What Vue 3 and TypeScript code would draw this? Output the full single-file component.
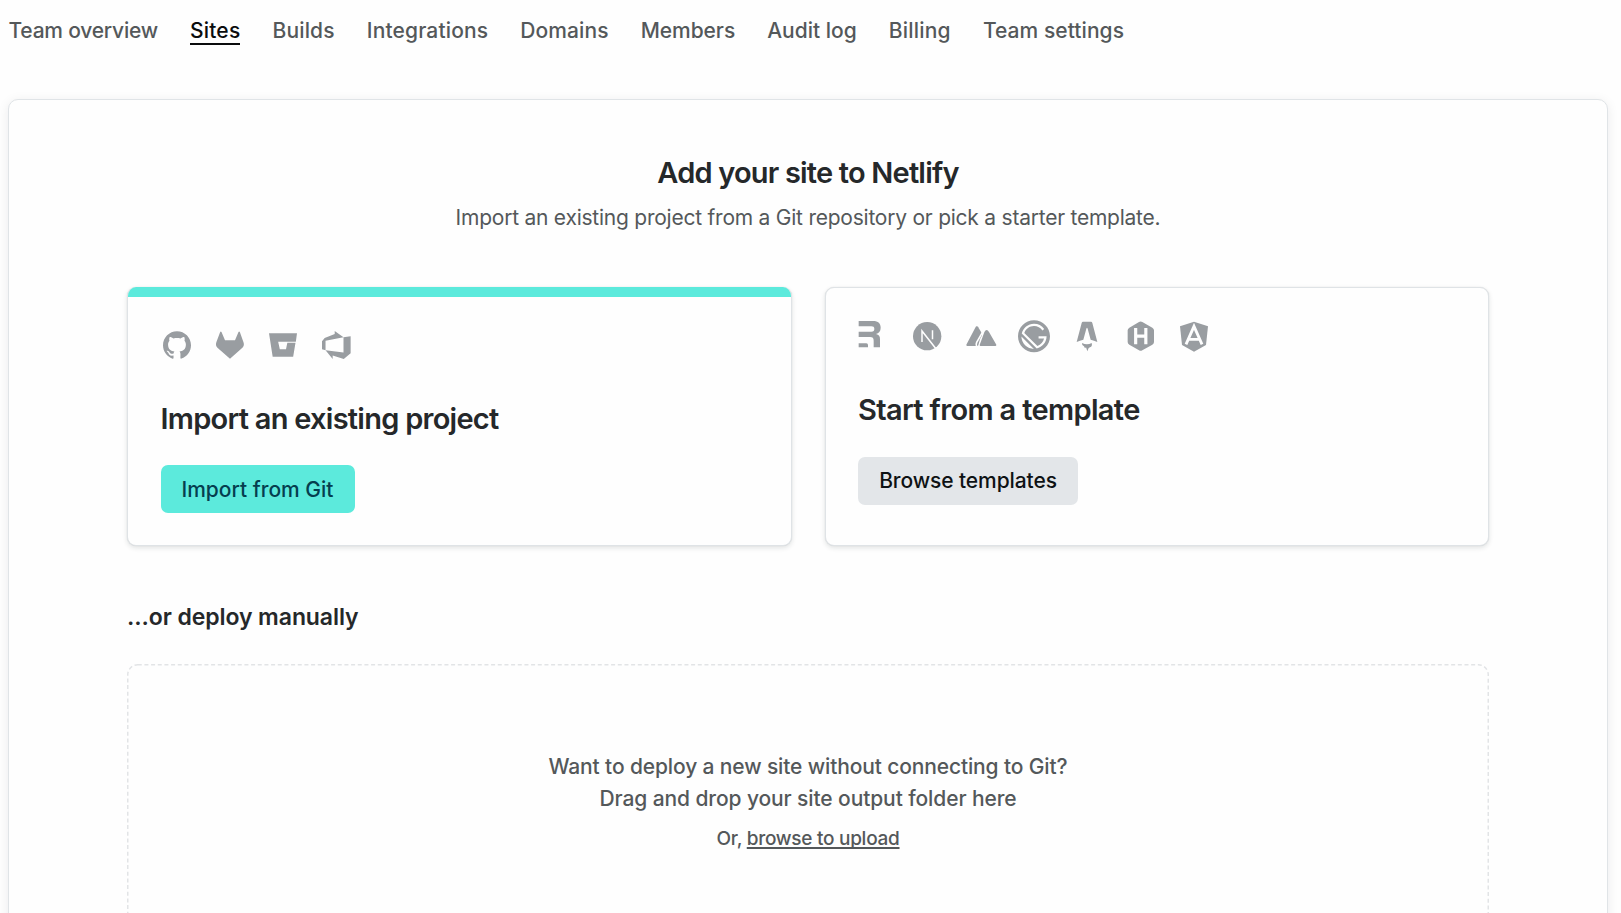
<script setup lang="ts">
interface NavItem {
  label: string
  tracking: number
  active?: boolean
}

const navItems: NavItem[] = [
  { label: 'Team overview', tracking: -0.22 },
  { label: 'Sites', tracking: 0.2, active: true },
  { label: 'Builds', tracking: 0.16 },
  { label: 'Integrations', tracking: 0.15 },
  { label: 'Domains', tracking: 0.1 },
  { label: 'Members', tracking: -0.06 },
  { label: 'Audit log', tracking: 0 },
  { label: 'Billing', tracking: 0.2 },
  { label: 'Team settings', tracking: 0.06 },
]
</script>

<template>
  <div class="page">
    <nav class="nav">
      <a
        v-for="item in navItems"
        :key="item.label"
        class="nav-link"
        :class="{ active: item.active }"
        :style="{ letterSpacing: item.tracking + 'px' }"
      >{{ item.label }}</a>
    </nav>

    <main class="panel">
      <h1 class="title">Add your site to Netlify</h1>
      <p class="subtitle">Import an existing project from a Git repository or pick a starter template.</p>

      <div class="cards">
        <section class="card card-import">
          <div class="icons">
            <!-- GitHub -->
            <svg viewBox="0 0 96 96"><path transform="translate(6 6) scale(3.5)" d="M12 .297c-6.63 0-12 5.373-12 12 0 5.303 3.438 9.8 8.205 11.385.6.113.82-.258.82-.577 0-.285-.01-1.04-.015-2.04-3.338.724-4.042-1.61-4.042-1.61C4.422 18.07 3.633 17.7 3.633 17.7c-1.087-.744.084-.729.084-.729 1.205.084 1.838 1.236 1.838 1.236 1.07 1.835 2.809 1.305 3.495.998.108-.776.417-1.305.76-1.605-2.665-.3-5.466-1.332-5.466-5.93 0-1.31.465-2.38 1.235-3.22-.135-.303-.54-1.523.105-3.176 0 0 1.005-.322 3.3 1.23.96-.267 1.98-.399 3-.405 1.02.006 2.04.138 3 .405 2.28-1.552 3.285-1.23 3.285-1.23.645 1.653.24 2.873.12 3.176.765.84 1.23 1.91 1.23 3.22 0 4.61-2.805 5.625-5.475 5.92.42.36.81 1.096.81 2.22 0 1.606-.015 2.896-.015 3.286 0 .315.21.69.825.57C20.565 22.092 24 17.592 24 12.297c0-6.627-5.373-12-12-12" /></svg>
            <!-- GitLab -->
            <svg viewBox="0 0 96 96"><path d="M18.5 9q2-3 4 0L33 34h30L73.500 9q2-3 4 0l11 31q4 11-5 18L48 89 12 58q-9-7-5-18z" /></svg>
            <!-- Bitbucket -->
            <svg viewBox="0 0 96 96"><path d="M6 13H90L86.500 38H33.500L38.500 61H57L61 41.500H85.500L78.500 83H17z" /></svg>
            <!-- Azure DevOps -->
            <svg viewBox="0 0 96 96"><path transform="translate(6 6) scale(3.58 3.5)" d="M0 8.877L2.247 5.91l8.405-3.416V.022l7.37 5.393L2.966 8.338v8.225L0 15.707zm24-4.45v14.651l-5.753 4.9-9.303-3.057v3.056l-5.978-7.416 15.057 1.798V5.415z" /></svg>
          </div>
          <h2 class="card-title import-title">Import an existing project</h2>
          <button class="btn btn-primary">Import from Git</button>
        </section>

        <section class="card card-template">
          <div class="icons">
            <!-- Remix -->
            <svg viewBox="0 0 96 96"><path d="M2 3H45C61 3 68 11 68 23C68 34 62 39 54 42C63 44 66 49 66 58V82H47V62C47 54 44 51 36 51H2V35H40C47 35 49 32 49 27C49 21 46 19 40 19H2zM2 70H25Q30 70 30 75V82H2z" /></svg>
            <!-- Next.js -->
            <svg viewBox="0 0 96 96">
              <circle cx="48.5" cy="48.5" r="42.500" />
              <path class="cut" stroke-width="4.500" d="M33 66V33L76 88M64.500 31V58" />
            </svg>
            <!-- Nuxt -->
            <svg viewBox="0 0 96 96"><path class="round" d="M37 75H7L33 26Q36 18 39 26L47 40zM47 75H91L69 37Q65 29 61 37zM7 75L35 22L48 45L32 75z" /><path class="cut" stroke-width="5" d="M54 34L35 67Q32 73 35 80" /></svg>
            <!-- Gatsby -->
            <svg viewBox="0 0 96 96"><path transform="translate(0 1) scale(4)" d="M12 0C5.400 0 0 5.400 0 12s5.400 12 12 12 12-5.400 12-12S18.600 0 12 0zm0 2.571c3.171 0 5.915 1.460 7.629 3.858l-1.286 1.115C16.886 5.572 14.571 4.286 12 4.286c-3.343 0-6.171 2.143-7.286 5.143l9.857 9.857c2.486-.857 4.373-3 4.973-5.572h-4.115V12h6c0 4.457-3.172 8.228-7.372 9.170L2.830 9.944C3.772 5.743 7.543 2.570 12 2.570zm-9.429 9.600l9.344 9.258c-2.400-.086-4.801-.943-6.601-2.743-1.800-1.800-2.743-4.201-2.743-6.515z" /></svg>
            <!-- Astro -->
            <svg viewBox="0 0 96 96"><path d="M36 5H60Q63 5 64 9L79 66Q69 61 59 59L50 26Q48 21 46 26L37 59Q27 61 17 66L32 9Q33 5 36 5zM33 69Q48 77 62 69Q65 79 57 82L53 84L49 94L45 82L42 85L39 79Q32 76 33 69z" /></svg>
            <!-- Hugo -->
            <svg viewBox="0 0 96 96"><path d="M42 6Q47 3 52 6L82 23Q87 26 87 31V66Q87 71 82 74L52 91Q47 94 42 91L13 74Q8 71 8 66V31Q8 26 13 23z" /><path class="cut" stroke-width="9.500" d="M32 24V73M62.500 24V73M32 48.500H62" /></svg>
            <!-- Angular -->
            <svg viewBox="0 0 96 96"><path d="M48 5L90 19L84 75L48 95L12 75L6 19z" /><path class="cut" stroke-width="8.500" d="M24 73L48 19L72 73M33 58H63" /></svg>
          </div>
          <h2 class="card-title template-title">Start from a template</h2>
          <button class="btn btn-secondary">Browse templates</button>
        </section>
      </div>

      <h3 class="manual-title">...or deploy manually</h3>

      <div class="dropzone">
        <svg class="dropzone-outline"><rect x="0.750" y="0.750" width="1360.500" height="400" rx="10" /></svg>
        <p class="drop-line question">Want to deploy a new site without connecting to Git?</p>
        <p class="drop-line">Drag and drop your site output folder here</p>
        <p class="upload">Or, <a class="upload-link">browse to upload</a></p>
      </div>
    </main>
  </div>
</template>

<style>
body {
  margin: 0;
  background: #fefefe;
  overflow: hidden;
}
</style>

<style scoped>
.page {
  box-sizing: border-box;
  width: 1621px;
  height: 913px;
  overflow: hidden;
  background: #fefefe;
  color: #54585a;
  font-family: Inter, "Liberation Sans", sans-serif;
}

h1, h2, h3, p {
  margin: 0;
}

.nav {
  display: flex;
  gap: 32.050px;
  padding: 15px 0 0 8.500px;
  height: 84px;
}

.nav-link {
  height: 27.500px;
  font-size: 21px;
  line-height: 31px;
  font-weight: 500;
  white-space: nowrap;
}

.nav-link.active {
  color: #0a0c0d;
  border-bottom: 2px solid #0a0c0d;
}

.panel {
  box-sizing: border-box;
  width: 1600px;
  height: 900px;
  margin-left: 8px;
  padding: 53px 118px 0;
  border: 1px solid #e0e4e7;
  border-radius: 10px;
  background: #fefefe;
  box-shadow: 0 2px 12px rgba(14, 30, 37, 0.08);
}

.title {
  font-size: 29px;
  line-height: 40px;
  font-weight: 600;
  letter-spacing: -0.810px;
  color: #25282a;
  text-align: center;
}

.subtitle {
  margin-top: 9px;
  font-size: 21px;
  line-height: 32px;
  letter-spacing: -0.235px;
  text-align: center;
}

.cards {
  display: grid;
  grid-template-columns: 1fr 1fr;
  gap: 33px;
  margin-top: 53px;
}

.card {
  box-sizing: border-box;
  height: 259px;
  padding: 32px 32.500px 0;
  border: 1px solid #dfe3e6;
  border-radius: 9px;
  background: #fefefe;
  box-shadow: 0 2px 5px rgba(14, 30, 37, 0.12), 0 0 1px rgba(14, 30, 37, 0.15);
}

.card-import {
  overflow: hidden;
  padding-top: 0;
  border-top: 0;
}

.card-import::before {
  content: "";
  display: block;
  height: 10px;
  margin: 0 -33.500px 32px;
  background: #5ceadc;
}

.icons {
  display: flex;
  gap: 21.333px;
}

.icons svg {
  width: 32px;
  height: 32px;
  fill: #999da1;
  overflow: visible;
}

.icons .cut {
  fill: none;
  stroke: #fefefe;
}

.icons .round {
  stroke: #999da1;
  stroke-width: 6;
  stroke-linejoin: round;
}

.card-title {
  margin-top: 38px;
  font-size: 29px;
  line-height: 40px;
  font-weight: 600;
  color: #25282a;
}

.import-title {
  margin-top: 37.500px;
  letter-spacing: -0.740px;
}

.template-title {
  letter-spacing: -0.650px;
}

.btn {
  display: block;
  height: 48px;
  margin-top: 27px;
  padding: 0;
  border: 0;
  border-radius: 7px;
  font: 500 21px/48px Inter, "Liberation Sans", sans-serif;
  white-space: nowrap;
}

.btn-primary {
  width: 194px;
  margin-top: 26.500px;
  padding-top: 1px;
  line-height: 47px;
  background: #5ceadc;
  color: #053e4f;
}

.btn-secondary {
  width: 220px;
  background: #e3e6e9;
  color: #0e1214;
  letter-spacing: -0.094px;
}

.manual-title {
  margin-top: 54px;
  font-size: 23px;
  line-height: 34px;
  font-weight: 600;
  letter-spacing: -0.080px;
  color: #25282a;
}

.dropzone {
  position: relative;
  box-sizing: border-box;
  height: 400px;
  margin-top: 30px;
  padding-top: 87px;
  text-align: center;
  font-weight: 500;
}

.dropzone-outline {
  position: absolute;
  top: 0;
  left: 0;
  width: 100%;
  height: 100%;
  fill: none;
  stroke: #e2e4e6;
  stroke-width: 1.500;
  stroke-dasharray: 4 2.667;
}

.drop-line {
  font-size: 21px;
  line-height: 32px;
  letter-spacing: -0.100px;
}

.question {
  letter-spacing: -0.133px;
}

.upload {
  margin-top: 8px;
  font-size: 19px;
  line-height: 32px;
  letter-spacing: -0.270px;
}

.upload-link {
  text-decoration: underline;
  text-decoration-thickness: 1.500px;
  text-underline-offset: 2px;
  text-decoration-skip-ink: none;
}
</style>
